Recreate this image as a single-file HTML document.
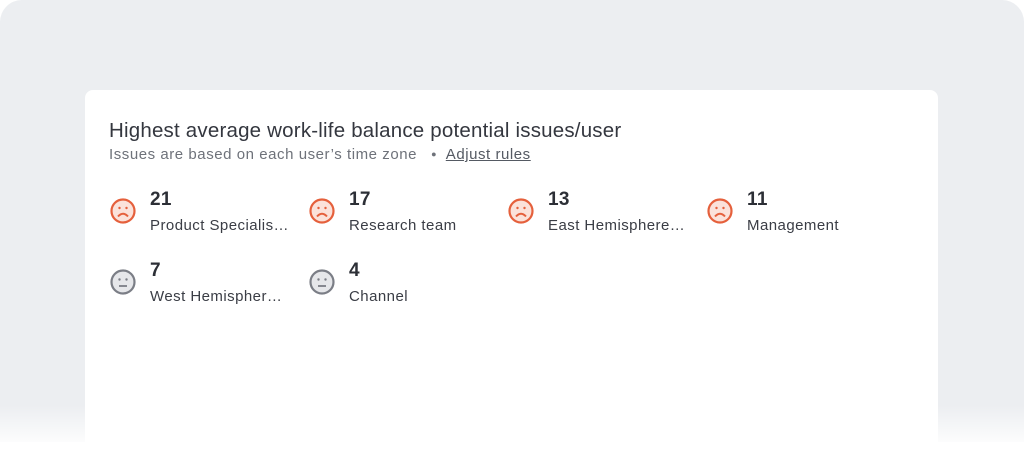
<!DOCTYPE html>
<html><head><style>
body{margin:0;width:1024px;height:442px;overflow:hidden;background:#fff;font-family:"Liberation Sans",Arial,sans-serif;}
.bg{position:absolute;left:0;top:0;width:1024px;height:442px;background:#eceef1;border-radius:22px 22px 0 0;}
.card{position:absolute;left:85px;top:90px;width:853px;height:360px;background:#fff;border-radius:8px;}
.fade{position:absolute;left:0;top:405px;width:1024px;height:37px;background:linear-gradient(rgba(255,255,255,0),rgba(255,255,255,0.85));}
.t{position:absolute;left:109px;top:119px;font-size:20.5px;letter-spacing:0.2px;color:#34373f;}
.s{position:absolute;left:109px;top:146px;font-size:15px;letter-spacing:0.55px;color:#6e727a;}
.s u{color:#555a63}
.it{position:absolute;}
.it svg{position:absolute;left:0;top:0}
.n{position:absolute;left:40px;top:-9px;font-size:19px;font-weight:bold;color:#2c2f36;letter-spacing:0.3px}
.l{position:absolute;left:40px;top:19px;font-size:15px;letter-spacing:0.45px;color:#3a3d45;white-space:nowrap;}
</style></head><body>
<div class="bg"></div>
<div class="card"></div>
<div class="t">Highest average work-life balance potential issues/user</div>
<div class="s">Issues are based on each user’s time zone &nbsp;&nbsp;<span style="font-size:9px;position:relative;top:-2px">●</span>&nbsp; <u>Adjust rules</u></div>

<div class="it" style="left:110px;top:198px"><svg width="26" height="26"><circle cx="13" cy="13" r="11.5" fill="#fbe2da" stroke="#e5603c" stroke-width="2.2"/><circle cx="9.5" cy="10" r="1.2" fill="#e5603c"/><circle cx="16.5" cy="10" r="1.2" fill="#e5603c"/><path d="M8 18.5 Q13 13 18 18.5" fill="none" stroke="#e5603c" stroke-width="2"/></svg><div class="n">21</div><div class="l">Product Specialis…</div></div>
<div class="it" style="left:309px;top:198px"><svg width="26" height="26"><circle cx="13" cy="13" r="11.5" fill="#fbe2da" stroke="#e5603c" stroke-width="2.2"/><circle cx="9.5" cy="10" r="1.2" fill="#e5603c"/><circle cx="16.5" cy="10" r="1.2" fill="#e5603c"/><path d="M8 18.5 Q13 13 18 18.5" fill="none" stroke="#e5603c" stroke-width="2"/></svg><div class="n">17</div><div class="l">Research team</div></div>
<div class="it" style="left:508px;top:198px"><svg width="26" height="26"><circle cx="13" cy="13" r="11.5" fill="#fbe2da" stroke="#e5603c" stroke-width="2.2"/><circle cx="9.5" cy="10" r="1.2" fill="#e5603c"/><circle cx="16.5" cy="10" r="1.2" fill="#e5603c"/><path d="M8 18.5 Q13 13 18 18.5" fill="none" stroke="#e5603c" stroke-width="2"/></svg><div class="n">13</div><div class="l">East Hemisphere…</div></div>
<div class="it" style="left:707px;top:198px"><svg width="26" height="26"><circle cx="13" cy="13" r="11.5" fill="#fbe2da" stroke="#e5603c" stroke-width="2.2"/><circle cx="9.5" cy="10" r="1.2" fill="#e5603c"/><circle cx="16.5" cy="10" r="1.2" fill="#e5603c"/><path d="M8 18.5 Q13 13 18 18.5" fill="none" stroke="#e5603c" stroke-width="2"/></svg><div class="n">11</div><div class="l">Management</div></div>

<div class="it" style="left:110px;top:269px"><svg width="26" height="26"><circle cx="13" cy="13" r="11.5" fill="#e6e7ea" stroke="#7b7e86" stroke-width="2.2"/><circle cx="9.5" cy="10.5" r="1.2" fill="#7b7e86"/><circle cx="16.5" cy="10.5" r="1.2" fill="#7b7e86"/><path d="M9 17 H17" stroke="#7b7e86" stroke-width="1.8"/></svg><div class="n">7</div><div class="l">West Hemispher…</div></div>
<div class="it" style="left:309px;top:269px"><svg width="26" height="26"><circle cx="13" cy="13" r="11.5" fill="#e6e7ea" stroke="#7b7e86" stroke-width="2.2"/><circle cx="9.5" cy="10.5" r="1.2" fill="#7b7e86"/><circle cx="16.5" cy="10.5" r="1.2" fill="#7b7e86"/><path d="M9 17 H17" stroke="#7b7e86" stroke-width="1.8"/></svg><div class="n">4</div><div class="l">Channel</div></div>
<div class="fade"></div>
</body></html>
